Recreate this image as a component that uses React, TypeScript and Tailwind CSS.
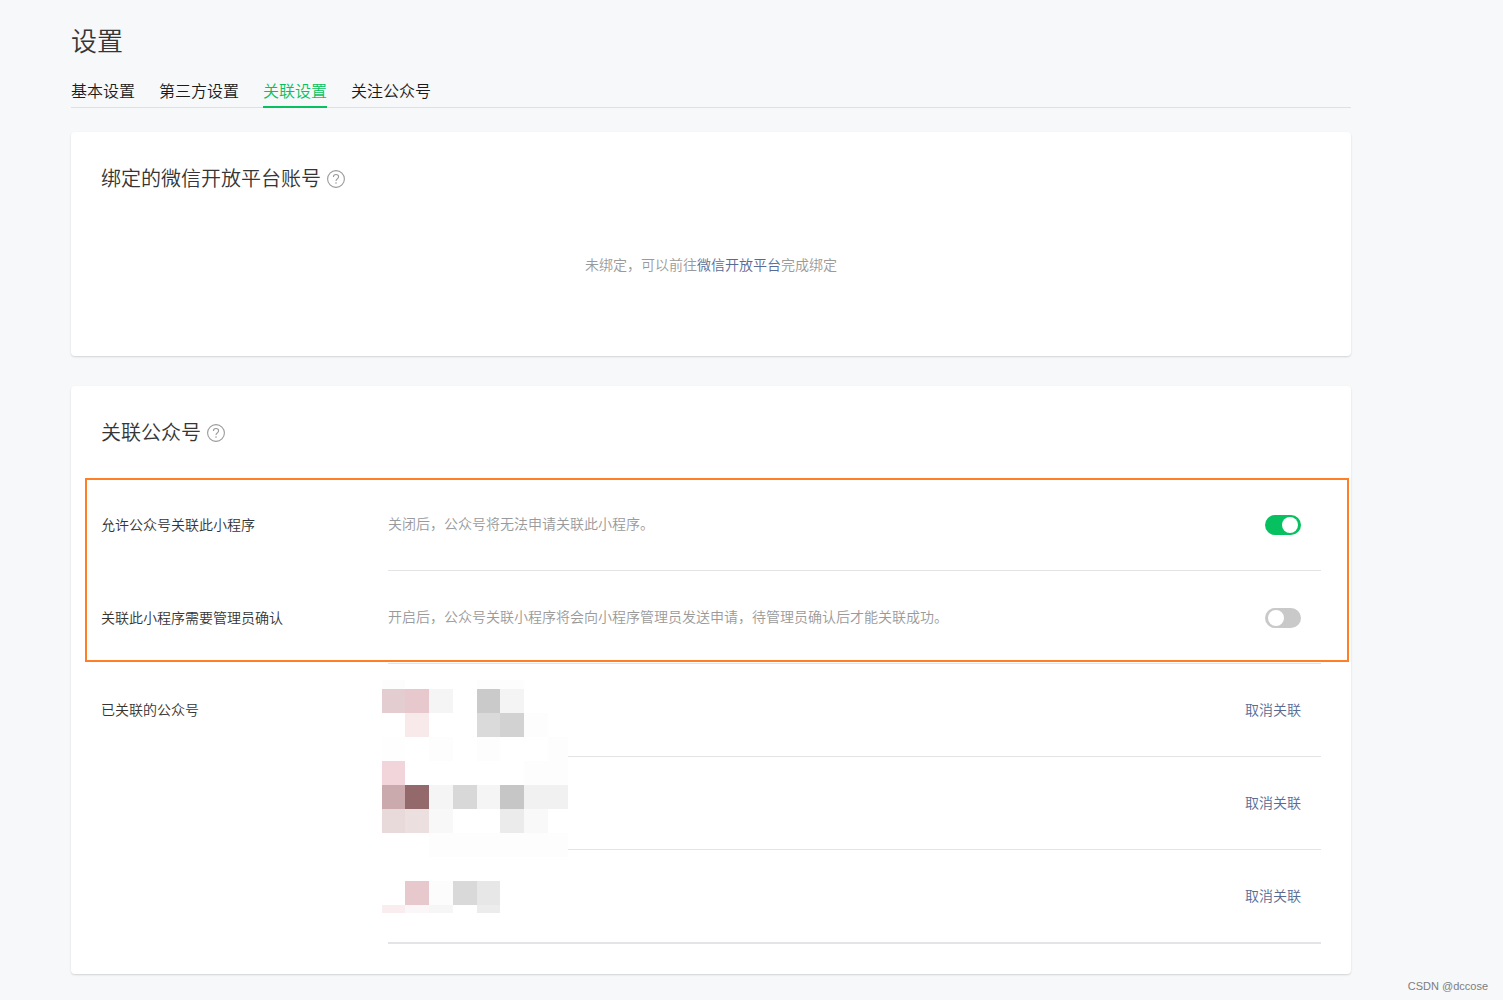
import { useState, type ReactNode } from "react";

const tabs = ["基本设置", "第三方设置", "关联设置", "关注公众号"];

function HelpIcon() {
  return (
    <svg width="18" height="18" viewBox="0 0 18 18" fill="none" stroke="#9a9a9a" aria-hidden="true">
      <circle cx="9" cy="9" r="8.4" strokeWidth="1.1" />
      <path d="M6.4 7.1C6.4 5.4 7.5 4.5 9 4.5s2.6 0.9 2.6 2.3c0 1.1-0.7 1.6-1.4 2.2-0.8 0.6-1.2 1.1-1.2 2.1" strokeWidth="1.1" />
      <circle cx="9" cy="13" r="0.8" fill="#9a9a9a" stroke="none" />
    </svg>
  );
}

function CardTitle({ children }: { children: ReactNode }) {
  return (
    <div className="flex items-center gap-1.5">
      <h2 className="text-xl leading-8 text-[#353535]">{children}</h2>
      <button type="button" aria-label="帮助" className="mt-0.5">
        <HelpIcon />
      </button>
    </div>
  );
}

function SwitchRow({
  id,
  label,
  description,
  initial,
}: {
  id: string;
  label: string;
  description: string;
  initial: boolean;
}) {
  const [on, setOn] = useState(initial);
  return (
    <div className="flex">
      <label htmlFor={id} className="w-[287px] shrink-0 pt-9 leading-5 text-[#353535]">
        {label}
      </label>
      <div className="flex grow items-start justify-between border-b border-[#e4e4e8] pt-[35px] pr-5 pb-[35px]">
        <p className="leading-5 text-[#9a9a9a]">{description}</p>
        <input
          id={id}
          type="checkbox"
          role="switch"
          checked={on}
          onChange={(e) => setOn(e.target.checked)}
          className="relative mt-0.5 h-5 w-9 shrink-0 cursor-pointer appearance-none rounded-full bg-[#c9c9c9] before:absolute before:top-0.5 before:left-[3px] before:size-4 before:rounded-full before:bg-white checked:bg-[#07c160] checked:before:left-[17px]"
        />
      </div>
    </div>
  );
}

// Cells of the pixelated account names: x, y, width, height, colour.
const cells: [number, number, number, number, string][] = [
  [0, 0, 23, 9, "#fefdfd"],
  [95, 0, 47, 9, "#fdfdfd"],
  [0, 9, 23, 24, "#e3cdd0"],
  [23, 9, 24, 24, "#e6c8cd"],
  [47, 9, 24, 24, "#f5f5f5"],
  [95, 9, 23, 24, "#cacaca"],
  [118, 9, 24, 24, "#f4f4f4"],
  [23, 33, 24, 24, "#f8eaeb"],
  [95, 33, 23, 24, "#dadada"],
  [118, 33, 24, 24, "#d2d2d2"],
  [142, 33, 24, 24, "#fdfdfd"],
  [0, 57, 23, 24, "#fefefe"],
  [47, 57, 24, 24, "#fdfdfd"],
  [95, 57, 23, 24, "#fdfdfd"],
  [166, 57, 20, 24, "#fdfdfd"],
  [0, 81, 23, 24, "#f2d5da"],
  [142, 81, 44, 24, "#fdfdfd"],
  [0, 105, 23, 24, "#cbaaae"],
  [23, 105, 24, 24, "#94696c"],
  [47, 105, 24, 24, "#f5f5f5"],
  [71, 105, 24, 24, "#d8d8d8"],
  [95, 105, 23, 24, "#f5f5f5"],
  [118, 105, 24, 24, "#c6c6c6"],
  [142, 105, 44, 24, "#f1f1f1"],
  [0, 129, 23, 24, "#e8dadb"],
  [23, 129, 24, 24, "#ebdfe0"],
  [47, 129, 24, 24, "#f8f8f8"],
  [118, 129, 24, 24, "#ebebeb"],
  [142, 129, 24, 24, "#f9f9f9"],
  [47, 153, 139, 24, "#fdfdfd"],
  [23, 201, 24, 24, "#e6c8cd"],
  [47, 201, 24, 24, "#fcfcfc"],
  [71, 201, 24, 24, "#d9d9d9"],
  [95, 201, 23, 24, "#e7e7e7"],
  [0, 225, 23, 8, "#f9edef"],
  [23, 225, 24, 8, "#fbf7f8"],
  [47, 225, 24, 8, "#f6f6f6"],
  [95, 225, 23, 8, "#ececec"],
];

function Mosaic() {
  return (
    <svg
      width="186"
      height="233"
      viewBox="0 0 186 233"
      shapeRendering="crispEdges"
      className="absolute top-4 -left-1.5"
      aria-hidden="true"
    >
      <rect width="186" height="233" fill="#ffffff" />
      {cells.map(([x, y, w, h, fill]) => (
        <rect key={`${x}-${y}`} x={x} y={y} width={w} height={h} fill={fill} />
      ))}
    </svg>
  );
}

export default function App() {
  const [active, setActive] = useState(2);
  return (
    <div className="relative min-h-screen bg-[#f7f8fa] pt-5 pr-[152px] pb-[26px] pl-[71px] font-['Noto_Sans_CJK_SC',sans-serif] text-sm font-[350]">
      <h1 className="text-[26px] leading-10 text-[#353535]">设置</h1>

      <nav className="mt-4 flex gap-6 border-b border-[#dfe0e2]">
        {tabs.map((tab, i) => (
          <a
            key={tab}
            href="#"
            onClick={(e) => {
              e.preventDefault();
              setActive(i);
            }}
            className={
              i === active
                ? "-mb-px border-b-2 border-[#07c160] pb-0.5 text-base leading-7 text-[#07c160]"
                : "-mb-px border-b-2 border-transparent pb-0.5 text-base leading-7 text-[#1a1b1c]"
            }
          >
            {tab}
          </a>
        ))}
      </nav>

      <main>
        <section className="mt-6 rounded bg-white px-[30px] pt-[30px] pb-[82px] shadow-[0_1px_2px_rgba(0,0,0,0.15)]">
          <CardTitle>绑定的微信开放平台账号</CardTitle>
          <p className="mt-[60px] text-center leading-5 text-[#9a9a9a]">
            未绑定，可以前往
            <a href="#" className="text-[#576b95]">
              微信开放平台
            </a>
            完成绑定
          </p>
        </section>

        <section className="mt-[30px] rounded bg-white p-[30px] shadow-[0_1px_2px_rgba(0,0,0,0.15)]">
          <CardTitle>关联公众号</CardTitle>
          <div className="relative mt-[30px]">
            <SwitchRow
              id="allow-link"
              label="允许公众号关联此小程序"
              description="关闭后，公众号将无法申请关联此小程序。"
              initial={true}
            />
            <SwitchRow
              id="admin-confirm"
              label="关联此小程序需要管理员确认"
              description="开启后，公众号关联小程序将会向小程序管理员发送申请，待管理员确认后才能关联成功。"
              initial={false}
            />
            <div className="pointer-events-none absolute top-0 -right-7 -left-4 h-[184px] border-2 border-[#ff7f27]" />
          </div>
          <div className="flex">
            <h3 className="w-[287px] shrink-0 pt-[35px] leading-5 text-[#353535]">已关联的公众号</h3>
            <ul className="relative grow border-b border-[#e4e4e8]">
              {[1, 2, 3].map((n) => (
                <li key={n} className="flex justify-end border-b border-[#e4e4e8] pt-[35px] pr-5 pb-[37px]">
                  <button type="button" className="leading-5 text-[#576b95]">
                    取消关联
                  </button>
                </li>
              ))}
              <Mosaic />
            </ul>
          </div>
        </section>
      </main>

      <footer className="absolute right-[15px] bottom-1.5 font-['Liberation_Sans',sans-serif] text-[11px] leading-4 font-normal text-[#7c7d7e]">
        CSDN @dccose
      </footer>
    </div>
  );
}
